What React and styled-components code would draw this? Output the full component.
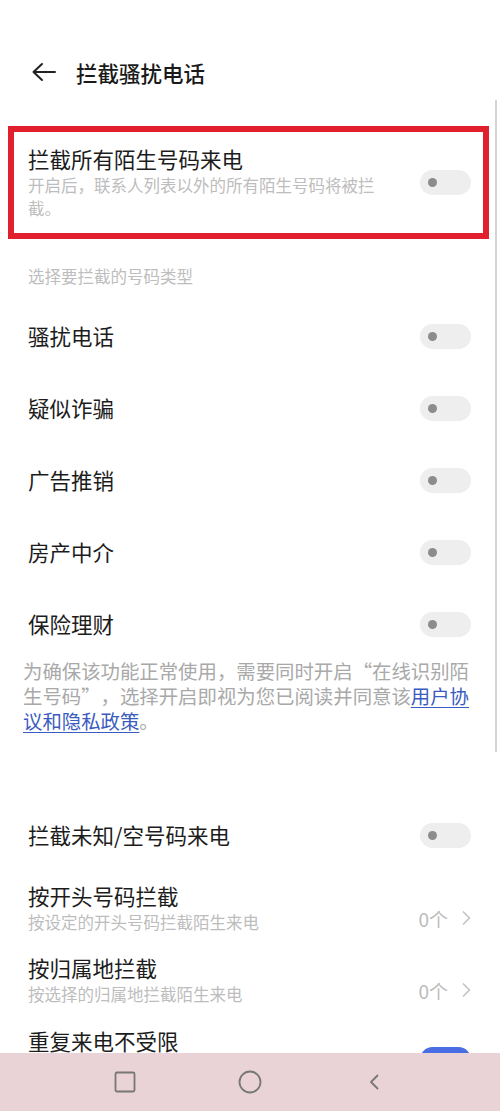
import React from 'react';
import styled, { createGlobalStyle } from 'styled-components';

const GlobalStyle = createGlobalStyle`
  html, body {
    margin: 0;
    padding: 0;
    background: #ffffff;
    overflow: hidden;
  }
  body {
    font-family: 'Noto Sans CJK SC', 'Noto Sans', sans-serif;
    color: #1c1c1c;
  }
`;

const blockTypes = ['骚扰电话', '疑似诈骗', '广告推销', '房产中介', '保险理财'];

const Toggle = ({ on }) => (
  <ToggleTrack $on={on}>
    <ToggleKnob $on={on} />
  </ToggleTrack>
);

const Chevron = () => (
  <svg width="10" height="16" viewBox="0 0 10 16">
    <polyline points="2,1.5 8.5,8 2,14.5" fill="none" stroke="#c4c4c4" strokeWidth="1.6" />
  </svg>
);

const App = () => {
  return (
    <Page lang="zh-CN">
      <GlobalStyle />
      <Header>
        <svg width="26" height="20" viewBox="0 0 26 20">
          <path d="M11 2 L2.5 10 L11 18 M2.5 10 H24" fill="none" stroke="#222" strokeWidth="2" strokeLinecap="round" strokeLinejoin="round" />
        </svg>
        <HeaderTitle>拦截骚扰电话</HeaderTitle>
      </Header>

      <Highlight>
        <TextCol>
          <Title>拦截所有陌生号码来电</Title>
          <Sub $wrap>开启后，联系人列表以外的所有陌生号码将被拦截。</Sub>
        </TextCol>
        <Toggle />
      </Highlight>

      <SectionLabel>选择要拦截的号码类型</SectionLabel>

      <TypeList>
        {blockTypes.map((t) => (
          <Row key={t}>
            <Title>{t}</Title>
            <Toggle />
          </Row>
        ))}
      </TypeList>

      <Notice>
        为确保该功能正常使用，需要同时开启<Quote $open>“</Quote>在线识别陌生号码<Quote>”</Quote>，选择开启即视为您已阅读并同意该<a>用户协议和隐私政策</a>。
      </Notice>

      <MoreList>
        <Row>
          <Title>拦截未知/空号码来电</Title>
          <Toggle />
        </Row>

        <Row>
          <TextCol>
            <Title>按开头号码拦截</Title>
            <Sub>按设定的开头号码拦截陌生来电</Sub>
          </TextCol>
          <Value>
            0个 <Chevron />
          </Value>
        </Row>

        <Row>
          <TextCol>
            <Title>按归属地拦截</Title>
            <Sub>按选择的归属地拦截陌生来电</Sub>
          </TextCol>
          <Value>
            0个 <Chevron />
          </Value>
        </Row>

        <Row $tall>
          <TextCol>
            <Title>重复来电不受限</Title>
            <Sub $wrap>同一号码在三分钟内多次来电时，不会被拦截。</Sub>
          </TextCol>
          <Toggle on />
        </Row>
      </MoreList>

      <ScrollBar />

      <NavBar>
        <svg width="22" height="22" viewBox="0 0 22 22">
          <rect x="1.5" y="1.5" width="19" height="19" rx="1.5" fill="none" stroke="#777" strokeWidth="1.8" />
        </svg>
        <svg width="24" height="24" viewBox="0 0 24 24">
          <circle cx="12" cy="12" r="10.5" fill="none" stroke="#777" strokeWidth="1.8" />
        </svg>
        <svg width="14" height="20" viewBox="0 0 14 20">
          <polyline points="10,3 3,10 10,17" fill="none" stroke="#777" strokeWidth="1.8" strokeLinejoin="round" />
        </svg>
      </NavBar>
    </Page>
  );
};

const Page = styled.div`
  width: 500px;
  min-height: 1111px;
  padding-top: 40px;
  box-sizing: border-box;
`;

const Header = styled.div`
  display: flex;
  align-items: center;
  gap: 19px;
  height: 64px;
  padding-left: 31px;
`;

const HeaderTitle = styled.div`
  font-size: 21.5px;
  font-weight: 500;
  color: #1a1a1a;
`;

const Highlight = styled.div`
  display: flex;
  align-items: center;
  justify-content: space-between;
  margin: 22px 11px 0 8px;
  padding: 12px 12px 13px 14px;
  border: 6px solid #e21f2c;
`;

const TextCol = styled.div`
  display: flex;
  flex-direction: column;
`;

const Title = styled.div`
  font-size: 21.5px;
  line-height: 30px;
  color: #1c1c1c;
`;

const Sub = styled.div`
  font-size: 16.5px;
  line-height: 23px;
  color: #bdbdbd;
  max-width: ${(p) => (p.$wrap ? '360px' : 'none')};
`;

const ToggleTrack = styled.div`
  position: relative;
  flex: none;
  width: 51px;
  height: 25px;
  border-radius: 13px;
  background: ${(p) => (p.$on ? '#4a6de3' : '#eeeeee')};
`;

const ToggleKnob = styled.div`
  position: absolute;
  top: 8px;
  left: ${(p) => (p.$on ? '34px' : '8px')};
  width: 9px;
  height: 9px;
  border-radius: 50%;
  background: ${(p) => (p.$on ? '#ffffff' : '#8c8c8c')};
`;

const SectionLabel = styled.div`
  margin: 26px 0 0 28px;
  font-size: 16.5px;
  line-height: 22px;
  color: #bdbdbd;
`;

const TypeList = styled.div`
  display: flex;
  flex-direction: column;
  margin-top: 13px;
`;

const MoreList = styled.div`
  display: flex;
  flex-direction: column;
  margin-top: 66px;
`;

const Row = styled.div`
  display: flex;
  align-items: ${(p) => (p.$tall ? 'flex-start' : 'center')};
  justify-content: space-between;
  height: ${(p) => (p.$tall ? '94px' : '72px')};
  padding: ${(p) => (p.$tall ? '11px' : '0')} 29px 0 28px;
  box-sizing: border-box;

  ${ToggleTrack} {
    margin-top: ${(p) => (p.$tall ? '21px' : '0')};
  }
`;

const Notice = styled.p`
  margin: -2px 30px 0 23px;
  font-size: 19.4px;
  line-height: 25px;
  color: #a9a9a9;

  a {
    color: #3a5bbf;
    text-decoration: underline;
    text-underline-offset: 3px;
  }
`;

const Quote = styled.span`
  display: inline-block;
  width: 1em;
  text-align: ${(p) => (p.$open ? 'right' : 'left')};
`;

const Value = styled.div`
  display: flex;
  align-items: center;
  gap: 13px;
  font-size: 19px;
  color: #bcbcbc;
  margin-top: 22px;
`;

const ScrollBar = styled.div`
  position: fixed;
  top: 100px;
  right: 3px;
  width: 2px;
  height: 652px;
  background: #d4d4d4;
`;

const NavBar = styled.div`
  position: fixed;
  left: 0;
  right: 0;
  bottom: 0;
  height: 58px;
  display: grid;
  grid-template-columns: repeat(3, 1fr);
  justify-items: center;
  align-items: center;
  padding: 0 62px;
  background: #ead3d7;
`;

export default App;
